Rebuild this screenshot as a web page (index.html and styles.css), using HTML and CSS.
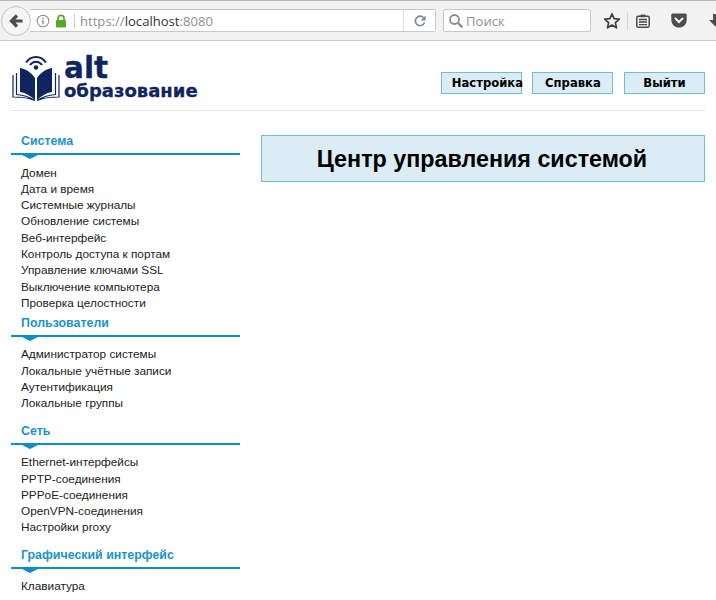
FILE: index.html
```html
<!DOCTYPE html>
<html lang="ru">
<head>
    <meta charset="UTF-8">
    <title>Центр управления системой</title>
    <link rel="stylesheet" href="styles.css">
</head>
<body>

    <div class="toolbar">
        <div class="back-button">
            <svg width="16" height="16" viewBox="0 0 16 16"><path d="M14.5 8 H4 M9 2.5 L3.5 8 L9 13.5" fill="none" stroke="#4d4d4d" stroke-width="3.2"/></svg>
        </div>
        <div class="url-bar">
            <svg class="info-icon" width="14" height="14" viewBox="0 0 14 14"><circle cx="7" cy="7" r="5.8" fill="none" stroke="#8c8c8c" stroke-width="1.1"/><rect x="6.3" y="6" width="1.4" height="4.4" fill="#8c8c8c"/><rect x="6.3" y="3.6" width="1.4" height="1.4" fill="#8c8c8c"/></svg>
            <svg class="lock-icon" width="12" height="14" viewBox="0 0 12 14"><path d="M3 6 V4.2 C3 2.4 4.3 1.3 6 1.3 C7.7 1.3 9 2.4 9 4.2 V6" fill="none" stroke="#57a82b" stroke-width="1.7"/><rect x="1" y="6" width="10" height="7.5" rx="1" fill="#57a82b"/></svg>
            <span class="url-sep"></span>
            <span class="url-text">https://<b>localhost</b>:8080</span>
            <span class="reload">
                <svg width="14" height="14" viewBox="0 0 14 14"><path d="M11.5 8.5 A4.7 4.7 0 1 1 10.6 3.8" fill="none" stroke="#7d8c99" stroke-width="1.7"/><path d="M12.6 1.4 V6.4 H7.6 Z" fill="#7d8c99"/></svg>
            </span>
        </div>
        <div class="search-bar">
            <svg width="16" height="16" viewBox="0 0 16 16"><circle cx="6.5" cy="6.5" r="4.5" fill="none" stroke="#8a8a8a" stroke-width="1.8"/><path d="M10 10 L14.5 14.5" stroke="#8a8a8a" stroke-width="2.2"/></svg>
            <span>Поиск</span>
        </div>
        <div class="tools">
            <svg width="18" height="18" viewBox="0 0 18 18"><path d="M9 1.8 L11.1 6.6 L16.3 7.1 L12.4 10.6 L13.5 15.8 L9 13.1 L4.5 15.8 L5.6 10.6 L1.7 7.1 L6.9 6.6 Z" fill="none" stroke="#404040" stroke-width="1.7" stroke-linejoin="round"/></svg>
            <span class="tool-sep"></span>
            <svg width="14" height="14" viewBox="0 0 14 14"><rect x="0.8" y="2.2" width="12.4" height="11" rx="1.4" fill="none" stroke="#4a4a4a" stroke-width="1.5"/><rect x="4.5" y="0.6" width="5" height="2.6" fill="#4a4a4a"/><path d="M3 5.5 H11 M3 8 H11 M3 10.6 H11" stroke="#4a4a4a" stroke-width="1.4"/></svg>
            <svg class="pocket" width="16" height="15" viewBox="0 0 16 15"><path d="M2 0.5 H14 C15 0.5 15.7 1.2 15.7 2.2 V7 C15.7 11.4 12.2 14.6 8 14.6 C3.8 14.6 0.3 11.4 0.3 7 V2.2 C0.3 1.2 1 0.5 2 0.5 Z" fill="#4d4d4d"/><path d="M4.5 5.5 L8 9 L11.5 5.5" fill="none" stroke="#f2f2f2" stroke-width="2" stroke-linecap="round"/></svg>
            <svg class="download" width="12" height="16" viewBox="0 0 12 16"><path d="M4 1 H12 V11 L8 15 L0 7 H4 Z" fill="#4d4d4d"/></svg>
        </div>
    </div>

    <div class="page">
        <div class="header">
            <div class="logo">
                <svg width="50" height="46" viewBox="0 0 50 46">
                    <path d="M15 7.5 C20 0 30 0 35 7.5" fill="none" stroke="#0f2560" stroke-width="2"/>
                    <path d="M19 10 C22 5.5 28 5.5 31 10" fill="none" stroke="#0f2560" stroke-width="2"/>
                    <circle cx="25" cy="12.5" r="2.2" fill="#0f2560"/>
                    <path d="M24 23 C21 18 15 14 9 13 V37 C15 38 20 41 24 45 Z" fill="#0f2560"/>
                    <path d="M26 23 C29 18 35 14 41 13 V37 C35 38 30 41 26 45 Z" fill="#0f2560"/>
                    <path d="M5.5 18 V39.5 C12 40 19 42 24 45.5 M2 20 V42 C10 42 18 43 24 45.5" fill="none" stroke="#0f2560" stroke-width="1.2"/>
                    <path d="M44.5 18 V39.5 C38 40 31 42 26 45.5 M48 20 V42 C40 42 32 43 26 45.5" fill="none" stroke="#0f2560" stroke-width="1.2"/>
                </svg>
                <div class="logo-text">
                    <span class="logo-alt">alt</span>
                    <span class="logo-sub">образование</span>
                </div>
            </div>
            <div class="header-buttons">
                <a class="header-btn header-btn-left">Настройка</a>
                <a class="header-btn">Справка</a>
                <a class="header-btn">Выйти</a>
            </div>
        </div>

        <div class="content">
            <div class="sidebar">
                <div class="section section-first">
                    <h3>Система</h3>
                    <ul>
                        <li>Домен</li>
                        <li>Дата и время</li>
                        <li>Системные журналы</li>
                        <li>Обновление системы</li>
                        <li>Веб-интерфейс</li>
                        <li>Контроль доступа к портам</li>
                        <li>Управление ключами SSL</li>
                        <li>Выключение компьютера</li>
                        <li>Проверка целостности</li>
                    </ul>
                </div>
                <div class="section section-tight">
                    <h3>Пользователи</h3>
                    <ul>
                        <li>Администратор системы</li>
                        <li>Локальные учётные записи</li>
                        <li>Аутентификация</li>
                        <li>Локальные группы</li>
                    </ul>
                </div>
                <div class="section">
                    <h3>Сеть</h3>
                    <ul>
                        <li>Ethernet-интерфейсы</li>
                        <li>PPTP-соединения</li>
                        <li>PPPoE-соединения</li>
                        <li>OpenVPN-соединения</li>
                        <li>Настройки proxy</li>
                    </ul>
                </div>
                <div class="section">
                    <h3>Графический интерфейс</h3>
                    <ul>
                        <li>Клавиатура</li>
                    </ul>
                </div>
            </div>
            <div class="main">
                <h1>Центр управления системой</h1>
            </div>
        </div>
    </div>

</body>
</html>
```

FILE: styles.css
```css
html, body {
    height: 600px;
    overflow: hidden;
}

body {
    margin: 0;
    background-color: white;
    font-family: 'Liberation Sans', Arial, sans-serif;
}

.toolbar {
    display: flex;
    align-items: center;
    box-sizing: border-box;
    height: 41px;
    padding-left: 1px;
    background-color: #f2f2f2;
    border-top: 1px solid #b5b5b5;
    border-bottom: 1px solid #c9c9c9;
    overflow: hidden;
}

.back-button {
    display: flex;
    align-items: center;
    justify-content: center;
    flex: none;
    z-index: 1;
    box-sizing: border-box;
    width: 30px;
    height: 30px;
    background-color: #f5f5f5;
    border: 1px solid #c4c4c4;
    border-radius: 50%;
}

.url-bar {
    display: flex;
    align-items: center;
    flex: none;
    box-sizing: border-box;
    width: 406px;
    height: 23px;
    margin-left: -1px;
    padding-left: 6px;
    background-color: white;
    border: 1px solid #c9c9c9;
    border-left: none;
    border-radius: 0 2px 2px 0;
}

.lock-icon {
    margin-left: 5px;
}

.url-sep {
    width: 1px;
    height: 16px;
    margin: 0 5px 0 7px;
    background-color: #d4d4d4;
}

.url-text {
    font-family: 'Open Sans', sans-serif;
    font-size: 13.1px;
    color: #8f8f8f;
}

.url-text b {
    font-weight: normal;
    color: #333;
}

.reload {
    display: flex;
    align-items: center;
    justify-content: center;
    align-self: stretch;
    width: 31px;
    margin-left: auto;
    border-left: 1px solid #e0e0e0;
}

.search-bar {
    display: flex;
    align-items: center;
    flex: none;
    gap: 2px;
    box-sizing: border-box;
    width: 148px;
    height: 23px;
    margin-left: 7px;
    padding-left: 4px;
    font-family: 'Open Sans', sans-serif;
    font-size: 13.1px;
    color: #8f8f8f;
    background-color: white;
    border: 1px solid #c9c9c9;
    border-radius: 2px;
}

.tools {
    display: flex;
    align-items: center;
    flex: none;
    margin-left: 12px;
}

.tool-sep {
    width: 1px;
    height: 18px;
    margin: 0 8px 0 6px;
    background-color: #d4d4d4;
}

.pocket {
    margin-left: 21px;
}

.download {
    margin-left: 22px;
}

.page {
    padding: 0 11px;
}

.header {
    display: flex;
    justify-content: space-between;
    box-sizing: border-box;
    height: 70px;
    padding-top: 14px;
    border-bottom: 1px solid #e6e6e6;
}

.logo {
    display: flex;
    align-items: flex-start;
    gap: 3px;
}

.logo-text {
    display: flex;
    flex-direction: column;
    font-family: 'DejaVu Sans', sans-serif;
    font-weight: bold;
    color: #0f2560;
    -webkit-text-stroke: 0.3px #0f2560;
}

.logo-alt {
    height: 26px;
    font-size: 29.5px;
    line-height: 26px;
}

.logo-sub {
    font-size: 18px;
    line-height: 20px;
}

.header-buttons {
    display: flex;
    gap: 10.6px;
    padding-top: 17px;
}

.header-btn {
    box-sizing: border-box;
    width: 81px;
    height: 22px;
    font-family: 'DejaVu Sans', sans-serif;
    font-size: 11.6px;
    font-weight: bold;
    line-height: 20px;
    text-align: center;
    color: black;
    white-space: nowrap;
    background-color: #dbecf5;
    border: 1px solid #70bcdc;
}

.header-btn-left {
    padding-left: 10px;
    text-align: left;
}

.content {
    display: flex;
    gap: 21px;
}

.sidebar {
    flex: none;
    width: 229px;
}

.section {
    margin-top: 11.2px;
}

.section-first {
    margin-top: 22px;
}

.section-tight {
    margin-top: 3.4px;
}

.section h3 {
    position: relative;
    box-sizing: border-box;
    height: 16px;
    margin: 0 0 15.6px;
    padding-left: 10px;
    font-size: 12.4px;
    line-height: 16px;
    color: #1a94c8;
}

.section h3::after {
    content: "";
    position: absolute;
    left: 0;
    right: 0;
    top: 20px;
    height: 2px;
    background-color: #0d8fc4;
}

.section h3::before {
    content: "";
    position: absolute;
    left: 11px;
    top: 22px;
    border-left: 8px solid transparent;
    border-right: 8px solid transparent;
    border-top: 4px solid #0d8fc4;
}

.section ul {
    margin: 0;
    padding: 0 0 0 10px;
    list-style: none;
}

.section li {
    height: 16.3px;
    font-size: 11.8px;
    line-height: 16.3px;
    color: #222;
}

.main {
    flex: 1;
    padding-top: 24px;
}

.main h1 {
    box-sizing: border-box;
    height: 47px;
    margin: 0;
    padding-right: 2px;
    font-size: 23.3px;
    line-height: 47px;
    text-align: center;
    color: black;
    background-color: #dbecf5;
    border: 1px solid #70bcdc;
}
```
